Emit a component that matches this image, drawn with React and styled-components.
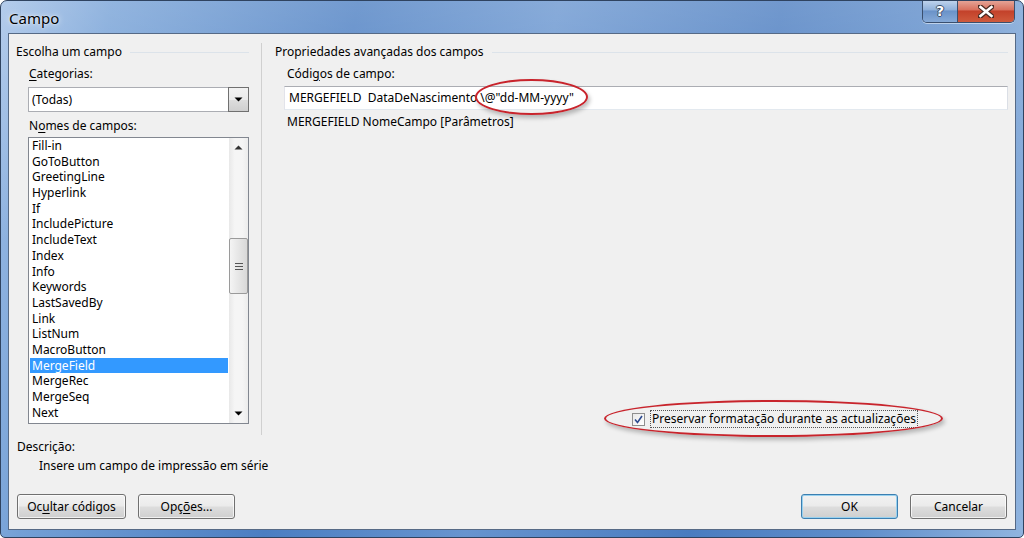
import React from "react";
import styled, { createGlobalStyle } from "styled-components";

const GlobalStyle = createGlobalStyle`
  html, body { margin: 0; padding: 0; background: #ffffff; }
  body {
    font-family: "Segoe UI", "Noto Sans", sans-serif;
    font-size: 12px;
    color: #000;
  }
`;

const Window = styled.div`
  width: 1024px;
  height: 538px;
  box-sizing: border-box;
  display: flex;
  flex-direction: column;
  border: 1px solid #2f4360;
  border-radius: 7px 7px 5px 5px;
  padding: 0 7px 7px 7px;
  background:
    linear-gradient(180deg, rgba(255,255,255,0.22) 0%, rgba(255,255,255,0) 45%),
    linear-gradient(100deg, #9fbee6 0%, #74a0d6 10%, #4b7ec2 32%, #6794cf 50%, #4a7cc0 70%, #5f8ecb 85%, #90b4df 100%);
  overflow: hidden;
`;

const TitleBar = styled.div`
  height: 32px;
  display: flex;
  align-items: flex-start;
`;

const Title = styled.div`
  font-size: 15px;
  line-height: 34px;
  padding-left: 1px;
  color: #000;
  text-shadow: 0 0 6px rgba(255,255,255,0.9), 0 0 2px rgba(255,255,255,0.8);
`;

const CaptionButtons = styled.div`
  margin-left: auto;
  margin-top: -1px;
  margin-right: 1px;
  display: flex;
  border: 1px solid #3a4f6e;
  border-top: none;
  border-radius: 0 0 5px 5px;
  overflow: hidden;
  box-shadow: 0 1px 0 rgba(255,255,255,0.5);
`;

const CaptionButton = styled.div`
  width: ${p => p.$w}px;
  height: 22px;
  display: flex;
  align-items: center;
  justify-content: center;
  background: ${p => p.$close
    ? "linear-gradient(180deg, #e6a99c 0%, #d8705d 45%, #c3412a 50%, #cf5a3c 100%)"
    : "linear-gradient(180deg, #c3d6ee 0%, #8fb0da 45%, #6a92c8 50%, #86aad8 100%)"};
  border-left: ${p => p.$close ? "1px solid #3a4f6e" : "none"};
`;

const HelpGlyph = styled.span`
  font-family: "DejaVu Sans", sans-serif;
  font-weight: bold;
  font-size: 14px;
  color: #fff;
  text-shadow: 1px 0 0 #3b4d66, -1px 0 0 #3b4d66, 0 1px 0 #3b4d66, 0 -1px 0 #3b4d66;
`;

const Client = styled.div`
  flex: 1;
  display: flex;
  flex-direction: column;
  background: #f0f0f0;
  border: 1px solid #566a86;
`;

const TopArea = styled.div`
  display: flex;
  height: 392px;
  margin-top: 9px;
`;

const LeftColumn = styled.div`
  width: 252px;
  display: flex;
  flex-direction: column;
`;

const Separator = styled.div`
  width: 1px;
  background: #d0d0d0;
`;

const RightColumn = styled.div`
  flex: 1;
  display: flex;
  flex-direction: column;
`;

const GroupHeading = styled.div`
  display: flex;
  align-items: center;
  line-height: 16px;
  margin-top: 1px;
  padding-left: ${p => p.$indent}px;
  padding-right: ${p => p.$end}px;

  &::after {
    content: "";
    flex: 1;
    height: 1px;
    margin-left: 8px;
    background: #dce3ea;
  }
`;

const FieldLabel = styled.div`
  line-height: 16px;
  margin-top: ${p => p.$top}px;
  margin-left: ${p => p.$left}px;
`;

const Key = styled.span`
  text-decoration: underline;
  text-underline-offset: 2px;
`;

const SelectBox = styled.div`
  margin: 5px 0 0 19px;
  width: 221px;
  height: 25px;
  box-sizing: border-box;
  display: flex;
  background: #fff;
  border: 1px solid #abadb3;
  border-right: none;
`;

const SelectValue = styled.div`
  flex: 1;
  line-height: 23px;
  padding-left: 3px;
`;

const DropButton = styled.div`
  width: 21px;
  margin: -1px 0;
  box-sizing: border-box;
  border: 1px solid #707070;
  background: linear-gradient(180deg, #f2f2f2 0%, #ebebeb 50%, #dddddd 51%, #cfcfcf 100%);
  display: flex;
  align-items: center;
  justify-content: center;
`;

const ListBox = styled.div`
  margin: 3px 0 0 19px;
  width: 221px;
  height: 287px;
  box-sizing: border-box;
  border: 1px solid #828790;
  background: #fff;
  display: flex;
`;

const ListItems = styled.div`
  flex: 1;
  overflow: hidden;
`;

const ListItem = styled.div`
  height: 15.7px;
  line-height: 15.7px;
  margin: 0 1px;
  padding-left: 2px;
  white-space: nowrap;
  background: ${p => p.$selected ? "#3399ff" : "transparent"};
  color: ${p => p.$selected ? "#fff" : "#000"};
`;

const ScrollBar = styled.div`
  width: 19px;
  display: flex;
  flex-direction: column;
  background: linear-gradient(90deg, #e8e8e8, #f5f5f5 30%, #f5f5f5 70%, #ececec);
`;

const ScrollArrow = styled.div`
  height: 19px;
  display: flex;
  align-items: center;
  justify-content: center;
`;

const ScrollTrack = styled.div`
  flex: 1;
  display: flex;
  flex-direction: column;
  padding-top: ${p => p.$thumbTop}px;
`;

const ScrollThumb = styled.div`
  height: 56px;
  box-sizing: border-box;
  border: 1px solid #9a9a9a;
  border-radius: 2px;
  background: linear-gradient(90deg, #f4f4f4 0%, #e6e6e6 50%, #d8d8d8 100%);
  display: flex;
  align-items: center;
  justify-content: center;
`;

const CodeInput = styled.div`
  margin: 4px 7px 0 22px;
  height: 24px;
  box-sizing: border-box;
  border: 1px solid #abadb3;
  border-color: #abadb3 #dbdfe6 #e3e9ef #e2e3ea;
  background: #fff;
  line-height: 22px;
  padding-left: 4px;
  white-space: pre;
`;

const ellipse = (l, r, t, b) => `
  position: relative;

  &::after {
    content: "";
    position: absolute;
    left: ${l}px;
    right: ${r}px;
    top: ${t}px;
    bottom: ${b}px;
    border: 2px solid #c8242c;
    border-radius: 50%;
    box-shadow: 2px 3px 4px rgba(0,0,0,0.25);
    pointer-events: none;
  }
`;

const FormatSwitch = styled.span`
  display: inline-block;
  ${ellipse(-5, -14, -8, -6)}
`;

const Syntax = styled.div`
  margin: 4px 0 0 25px;
  line-height: 16px;
`;

const CheckRow = styled.div`
  margin: auto 0 7px 370px;
  height: 18px;
  display: flex;
  align-items: center;
  align-self: flex-start;
  ${ellipse(-28, -25, -10, -9)}
`;

const CheckBox = styled.div`
  width: 13px;
  height: 13px;
  box-sizing: border-box;
  border: 1px solid #8f8f8f;
  background: linear-gradient(135deg, #e9e9e9, #ffffff);
  display: flex;
  align-items: center;
  justify-content: center;
`;

const FocusLabel = styled.span`
  margin-left: 5px;
  padding: 0 1px;
  line-height: 16px;
  border: 1px dotted #555;
`;

const Description = styled.div`
  margin-top: 4px;
  padding-left: 8px;
  line-height: 16px;
`;

const DescriptionText = styled.div`
  margin-top: 3px;
  padding-left: 30px;
  line-height: 16px;
`;

const ButtonRow = styled.div`
  margin-top: 20px;
  padding: 0 8px;
  display: flex;
  gap: 12px;
`;

const Button = styled.div`
  width: ${p => p.$w}px;
  height: 25px;
  box-sizing: border-box;
  border: 1px solid ${p => p.$default ? "#3c7fb1" : "#707070"};
  border-radius: 3px;
  background: linear-gradient(180deg, #f2f2f2 0%, #ebebeb 48%, #dddddd 52%, #cfcfcf 100%);
  box-shadow: inset 0 0 0 1px ${p => p.$default ? "#98d1ef" : "rgba(255,255,255,0.7)"};
  display: flex;
  align-items: center;
  justify-content: center;
  line-height: 16px;
  margin-left: ${p => p.$push ? "auto" : "0"};
`;

const fields = [
  "Fill-in", "GoToButton", "GreetingLine", "Hyperlink", "If", "IncludePicture",
  "IncludeText", "Index", "Info", "Keywords", "LastSavedBy", "Link", "ListNum",
  "MacroButton", "MergeField", "MergeRec", "MergeSeq", "Next",
];

function Triangle({ up }) {
  return (
    <svg width="9" height="5" viewBox="0 0 9 5">
      <path d={up ? "M0.5 4.5 L4.5 0.5 L8.5 4.5 Z" : "M0.5 0.5 L8.5 0.5 L4.5 4.5 Z"} fill={up ? "#333" : "#000"} />
    </svg>
  );
}

export default function App() {
  return (
    <>
      <GlobalStyle />
      <Window>
        <TitleBar>
          <Title>Campo</Title>
          <CaptionButtons>
            <CaptionButton $w={34}>
              <HelpGlyph>?</HelpGlyph>
            </CaptionButton>
            <CaptionButton $w={56} $close>
              <svg width="16" height="13" viewBox="0 0 16 13">
                <path d="M2 1.5 L14 11.5 M14 1.5 L2 11.5" stroke="#4a2a22" strokeWidth="5" strokeLinecap="square" />
                <path d="M2.5 2 L13.5 11 M13.5 2 L2.5 11" stroke="#fff" strokeWidth="2.6" strokeLinecap="square" />
              </svg>
            </CaptionButton>
          </CaptionButtons>
        </TitleBar>
        <Client>
          <TopArea>
            <LeftColumn>
              <GroupHeading $indent={7} $end={12}>Escolha um campo</GroupHeading>
              <FieldLabel $top={6} $left={20}><Key>C</Key>ategorias:</FieldLabel>
              <SelectBox>
                <SelectValue>(Todas)</SelectValue>
                <DropButton><Triangle /></DropButton>
              </SelectBox>
              <FieldLabel $top={6} $left={20}>N<Key>o</Key>mes de campos:</FieldLabel>
              <ListBox>
                <ListItems>
                  {fields.map(f => (
                    <ListItem key={f} $selected={f === "MergeField"}>{f}</ListItem>
                  ))}
                </ListItems>
                <ScrollBar>
                  <ScrollArrow><Triangle up /></ScrollArrow>
                  <ScrollTrack $thumbTop={81}>
                    <ScrollThumb>
                      <svg width="8" height="7" viewBox="0 0 8 7">
                        <path d="M0 0.5 H8 M0 3.5 H8 M0 6.5 H8" stroke="#555" strokeWidth="1" />
                      </svg>
                    </ScrollThumb>
                  </ScrollTrack>
                  <ScrollArrow><Triangle /></ScrollArrow>
                </ScrollBar>
              </ListBox>
            </LeftColumn>
            <Separator />
            <RightColumn>
              <GroupHeading $indent={13} $end={7}>Propriedades avançadas dos campos</GroupHeading>
              <FieldLabel $top={6} $left={25}>Códi<Key>g</Key>os de campo:</FieldLabel>
              <CodeInput>
                {"MERGEFIELD  DataDeNascimento "}
                <FormatSwitch>{'\\@"dd-MM-yyyy"'}</FormatSwitch>
              </CodeInput>
              <Syntax>MERGEFIELD NomeCampo [Parâmetros]</Syntax>
              <CheckRow>
                <CheckBox>
                  <svg width="9" height="9" viewBox="0 0 9 9">
                    <path d="M1 4.5 L3.5 7.5 L8 1" fill="none" stroke="#2c4a8f" strokeWidth="1.6" />
                  </svg>
                </CheckBox>
                <FocusLabel>Preservar formatação durante as actualizações</FocusLabel>
              </CheckRow>
            </RightColumn>
          </TopArea>
          <Description>Descrição:</Description>
          <DescriptionText>Insere um campo de impressão em série</DescriptionText>
          <ButtonRow>
            <Button $w={109}>Oc<Key>u</Key>ltar códigos</Button>
            <Button $w={97}>Opç<Key>õ</Key>es...</Button>
            <Button $w={97} $default $push>OK</Button>
            <Button $w={97}>Cancelar</Button>
          </ButtonRow>
        </Client>
      </Window>
    </>
  );
}
